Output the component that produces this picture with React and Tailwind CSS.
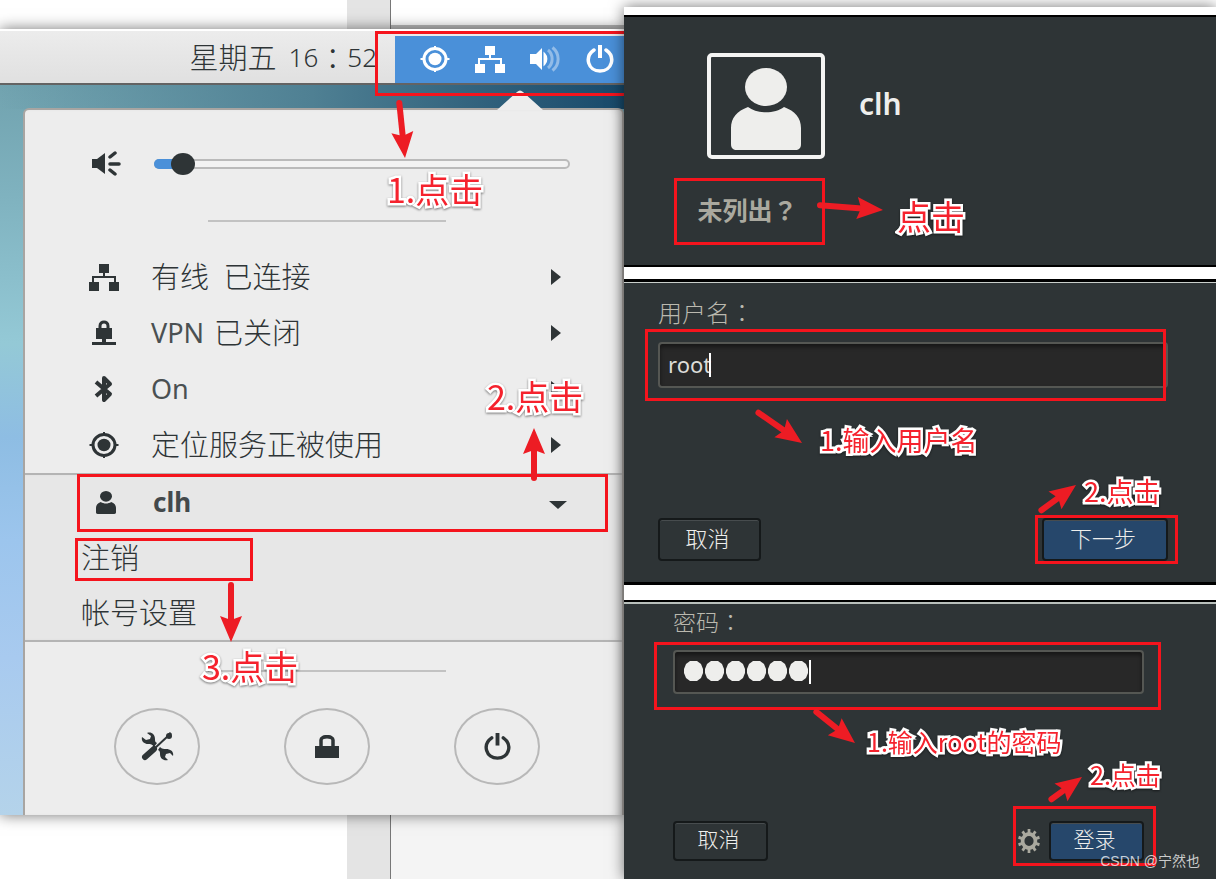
const CJK = "font-['Noto_Sans','Noto_Sans_CJK_SC',sans-serif]";

const NetworkIcon = ({ className }) => (
  <svg width="30" height="28" viewBox="0 0 30 28" fill="currentColor" className={className} aria-hidden="true">
    <path
      d="M10 1h10v9h-4v3h11v6h3v9H20v-9h5v-4H5v4h5v9H0v-9h3v-6h11v-3h-4z"
    />
  </svg>
);

const TargetIcon = ({ className }) => (
  <svg width="30" height="28" viewBox="0 0 30 28" className={className} aria-hidden="true">
    <ellipse cx="15" cy="14" rx="11" ry="10.5" fill="none" stroke="currentColor" strokeWidth="3" />
    <ellipse cx="15" cy="14" rx="6.5" ry="6.2" fill="currentColor" />
    <path d="M15 1v4M15 23v4M.5 14H5M25 14h4.500" stroke="currentColor" strokeWidth="2" />
  </svg>
);

const VolumeIcon = () => (
  <svg width="32" height="28" viewBox="0 0 32 28" fill="none" aria-hidden="true">
    <path d="M1 9h6l6-6v22l-6-6H1z" fill="currentColor" />
    <path d="M15.500 9c2.500 2.500 2.500 7.500 0 10z" fill="currentColor" stroke="currentColor" strokeWidth="2" />
    <path d="M19 5c5.500 4.500 5.500 13.500 0 18M23.500 2.500c7.500 6 7.500 17 0 23" stroke="currentColor" strokeWidth="3" opacity=".4" />
  </svg>
);

const SpeakerIcon = () => (
  <svg width="30" height="26" viewBox="0 0 30 26" aria-hidden="true">
    <path d="M0 8h5l8-6v21l-8-6H0z" fill="currentColor" />
    <path d="M18 6l5-4M18 13h9M18 19l5 4" stroke="currentColor" strokeWidth="3.500" strokeLinecap="round" />
  </svg>
);

const PowerIcon = ({ width, height }) => (
  <svg width={width} height={height} viewBox="0 0 28 28" preserveAspectRatio="none" fill="none" stroke="currentColor" aria-hidden="true">
    <path d="M8 5C-2 12 2 26 14 26S30 12 20 5" strokeWidth="3.500" strokeLinecap="round" />
    <path d="M14 0v13" strokeWidth="4" />
  </svg>
);

const VpnIcon = () => (
  <svg width="24" height="26" viewBox="0 0 24 26" fill="none" aria-hidden="true">
    <path d="M8 8V6c0-5.500 8-5.500 8 0v2" stroke="currentColor" strokeWidth="3" />
    <path d="M4 8h16v11h-6v3h10v3H0v-3h10v-3H4z" fill="currentColor" />
  </svg>
);

const BluetoothIcon = () => (
  <svg width="20" height="28" viewBox="0 0 20 28" fill="none" aria-hidden="true">
    <path d="M2 7l14 12-6 6V3l6 6L2 21" stroke="currentColor" strokeWidth="4" strokeLinejoin="round" />
  </svg>
);

const UserIcon = ({ width, height, className }) => (
  <svg width={width} height={height} viewBox="0 0 70 82" preserveAspectRatio="none" fill="currentColor" className={className} aria-hidden="true">
    <ellipse cx="35" cy="19" rx="21" ry="19" />
    <path d="M17 39c9 7 27 7 36 0 11 4 17 11 17 21v16c0 4-2 6-6 6H6c-4 0-6-2-6-6V60c0-10 6-17 17-21z" />
  </svg>
);

// screwdriver crossed over a double-ended wrench
const ToolsIcon = () => (
  <svg width="33" height="29" viewBox="0 0 33 29" fill="none" stroke="currentColor" aria-hidden="true">
    <path d="M4 25l9-8" strokeWidth="6" strokeLinecap="round" />
    <path d="M13 17L27 4" strokeWidth="2" />
    <circle cx="28" cy="4" r="3" fill="currentColor" stroke="none" />
    <path d="M28 3l2-2" strokeWidth="3" />
    <path
      d="M6 1C10-.5 14 2 14 7c0 2 0 3 2 4l-3 4c-2-3-3-3-6-3-4 0-7-3-6-7l4 3 4-1 1-3zM27 28c-4 1-8-1-8-6 0-2 0-3-2-4l2-3c2 2 4 2 6 2 5 0 8 3 7 7l-3-3-4 1-1 3z"
      fill="currentColor"
      stroke="none"
    />
  </svg>
);

const LockIcon = () => (
  <svg width="24" height="24" viewBox="0 0 24 24" fill="none" aria-hidden="true">
    <path d="M6 12V5c0-4.500 12-4.500 12 0v7" stroke="currentColor" strokeWidth="3.500" />
    <path d="M0 11h24v12H0z" fill="currentColor" />
  </svg>
);

const GearIcon = () => (
  <svg width="22" height="24" viewBox="-12 -12 24 24" preserveAspectRatio="none" fill="none" stroke="currentColor" aria-hidden="true">
    <circle r="7" strokeWidth="4" />
    {[0, 36, 72, 108, 144, 180, 216, 252, 288, 324].map((a) => (
      <path key={a} d="M0-7V-12" strokeWidth="3" transform={`rotate(${a})`} />
    ))}
  </svg>
);

const Caret = ({ open }) => (
  <svg width="18" height="18" viewBox="0 0 18 18" fill="currentColor" className="ml-auto" aria-hidden="true">
    {open ? <path d="M0 7h18l-9 8z" /> : <path d="M2 1l10 8-10 8z" />}
  </svg>
);

// red arrows drawn over a figure, each one [x1, y1, x2, y2]
const Arrows = ({ items }) => (
  <svg className="pointer-events-none absolute inset-0 size-full overflow-visible" aria-hidden="true">
    {items.map(([x1, y1, x2, y2]) => {
      const len = Math.hypot(x2 - x1, y2 - y1);
      const angle = (Math.atan2(y2 - y1, x2 - x1) * 180) / Math.PI;
      return (
        <g key={`${x1}-${y1}`} transform={`translate(${x2} ${y2}) rotate(${angle})`} fill="#ed1c24" stroke="#ed1c24">
          <path d={`M${-len + 3} 0H-18`} strokeWidth="6" strokeLinecap="round" />
          <path d="M0 0L-26 -11L-22 0L-26 11z" stroke="none" />
        </g>
      );
    })}
  </svg>
);

const Mark = ({ className }) => (
  <span className={`pointer-events-none absolute border-[3px] border-[#f5141d] ${className}`} />
);

const Note = ({ className, children }) => (
  <span
    className={`absolute font-['Noto_Sans_CJK_SC',sans-serif] leading-none whitespace-nowrap text-[#f5222d] drop-shadow-[0_1px_1px_rgba(0,0,0,0.5)] [-webkit-text-stroke:5px_white] [paint-order:stroke_fill] ${className}`}
  >
    {children}
  </span>
);

// full-width punctuation, centred in its square
const Punct = ({ children }) => <span className="font-['Noto_Sans_CJK_TC',sans-serif]">{children}</span>;

const menuItems = [
  { icon: <NetworkIcon />, label: "有线\u2002已连接" },
  { icon: <VpnIcon />, latin: "VPN", label: "已关闭" },
  { icon: <BluetoothIcon />, latin: "On" },
  { icon: <TargetIcon />, label: "定位服务正被使用" }
];

const MenuRow = ({ icon, latin, label }) => (
  <button type="button" className="flex h-14 w-full items-center pr-[55px] pl-16 text-left">
    <span className="flex w-[30px] justify-center">{icon}</span>
    <span className="ml-8 flex items-center gap-[10px] pb-[2px] text-[29px] leading-none font-light">
      {latin && <span className="text-[27px] font-normal text-[#4a5052]">{latin}</span>}
      {label}
    </span>
    <Caret />
  </button>
);

const RoundButton = ({ label, children }) => (
  <button
    type="button"
    aria-label={label}
    className="flex h-[77px] w-[86px] items-center justify-center rounded-[50%] border-2 border-[#b8b8b8]"
  >
    {children}
  </button>
);

const DocStrip = ({ className, right }) => (
  <div className={`flex ${className}`}>
    <div className="w-[347px] bg-white" />
    <div className="w-[44px] border-r border-[#777] bg-[#e4e4e4]" />
    <div className={`flex-1 ${right}`} />
  </div>
);

const DarkButton = ({ className, children }) => (
  <button
    type="button"
    className={`rounded-[4px] border-2 border-[#15191a] pr-1 pb-1 leading-none font-light text-[#eeeeec] shadow-[inset_0_1px_0_#474c4e] ${className}`}
  >
    {children}
  </button>
);

const inputStyle =
  "w-full rounded-[4px] border-2 border-[#555753] bg-[#282828] px-2 text-[22px] shadow-[inset_0_3px_4px_rgba(0,0,0,0.45)] outline-none";

function SystemMenu() {
  return (
    <div className="relative overflow-hidden bg-[linear-gradient(180deg,#6a9ba7_0%,#80b3c0_22%,#94c9d6_40%,#8ebde3_52%,#9cc5ed_65%,#a8caef_80%,#b4d3ea_100%)]">
      <header className="flex h-[56px] items-stretch justify-end border-t-2 border-b-2 border-t-white border-b-[#636363] bg-gradient-to-b from-[#ececec] to-[#e0e0e0]">
        <time className="flex items-center text-[29px] leading-none font-light">
          星期五<span className="ml-3 text-[26px]">16</span>
          <Punct>：</Punct>
          <span className="text-[26px]">52</span>
        </time>
        <div className="mt-[5px] ml-[18px] flex w-[229px] items-center justify-between bg-[#4a90d9] pr-[10px] pb-[2px] pl-[25px] text-white">
          <TargetIcon />
          <NetworkIcon />
          <VolumeIcon />
          <PowerIcon width="28" height="28" />
        </div>
      </header>

      <div className="bg-gradient-to-r from-transparent via-[#4f8093] to-[#17496a] bg-[length:100%_24px] bg-no-repeat pt-[23px] pl-[23px]">
        <section className="relative rounded-tl-md rounded-tr-md border-t-2 border-r-2 border-l-2 border-[#a8a5a2] bg-[#ededed] shadow-[inset_-8px_0_8px_-6px_rgba(0,0,0,0.2)]">
          <svg width="46" height="20" viewBox="0 0 46 20" className="absolute -top-5 right-[79px]" aria-hidden="true">
            <path d="M0 20L20 2q3-3 6 0l20 18z" fill="#ededed" />
          </svg>

          <div className="mt-[26px] flex h-14 items-center pl-[67px]">
            <SpeakerIcon />
            <label className="relative ml-8 flex h-6 flex-1 items-center">
              <input
                type="range"
                defaultValue="7"
                aria-label="音量"
                className="absolute inset-0 w-full opacity-0"
              />
              <span className="h-[10px] flex-1 rounded-full border-2 border-[#bababa] bg-[#f2f2f2]" />
              <span className="absolute left-0 h-[10px] w-8 rounded-l-full bg-[#4a90d9]" />
              <span className="absolute left-[17px] h-[22px] w-6 rounded-[50%] bg-[#2e3436]" />
            </label>
            <span className="w-[52px]" />
          </div>
          <hr className="mt-7 mb-[27px] ml-[183px] w-[238px] border-t-2 border-[#c2c2c2]" />

          {menuItems.map((item, i) => (
            <MenuRow key={i} {...item} />
          ))}

          <div className="border-y-2 border-[#b4b4b4] bg-[#e7e7e7] shadow-[inset_-8px_0_8px_-6px_rgba(0,0,0,0.2)]">
            <div className="relative">
              <button type="button" className="flex h-[55px] w-full items-center pr-[55px] pl-[66px] text-left">
                <span className="flex w-[30px] justify-center">
                  <UserIcon width="20" height="23" />
                </span>
                <span className="ml-8 pb-[2px] text-[26px] leading-none font-bold text-[#43494b]">clh</span>
                <Caret open />
              </button>
              <Mark className="-top-px -bottom-[2px] left-[52px] right-[14px]" />
            </div>
            <div className="relative">
              <button type="button" className="h-[55px] w-full pl-[56px] text-left text-[29px] leading-none font-light">
                注销
              </button>
              <Mark className="top-2 bottom-1 left-[50px] w-[178px]" />
            </div>
            <button type="button" className="h-[55px] w-full pl-[56px] text-left text-[29px] leading-none font-light">
              帐号设置
            </button>
          </div>

          <hr className="mt-7 mb-9 ml-[183px] w-[238px] border-t-2 border-[#c2c2c2]" />
          <div className="flex gap-[84px] pb-[30px] pl-[89px]">
            <RoundButton label="设置">
              <ToolsIcon />
            </RoundButton>
            <RoundButton label="锁定">
              <LockIcon />
            </RoundButton>
            <RoundButton label="关机">
              <PowerIcon width="27" height="27" />
            </RoundButton>
          </div>
        </section>
      </div>

      <Mark className="top-[2px] -right-[3px] h-[65px] w-[252px]" />
      <Note className="top-[143px] left-[387px] text-[34px]">1.点击</Note>
      <Note className="top-[350px] left-[487px] text-[34px]">2.点击</Note>
      <Note className="top-[620px] left-[202px] text-[34px]">3.点击</Note>
      <Arrows
        items={[
          [399, 71, 405, 129],
          [534, 452, 534, 399],
          [231, 553, 231, 613]
        ]}
      />
    </div>
  );
}

function UserPicker() {
  return (
    <section className="relative border-y-2 border-black bg-[#2e3436] pt-9 pb-5">
      <div className="flex items-center gap-[34px] pl-[83px]">
        <div className="flex h-[106px] w-[118px] items-end justify-center rounded-[5px] border-4 border-[#f4f4f3] pb-[5px] text-[#eeeeec]">
          <UserIcon width="70" height="82" />
        </div>
        <span className="pb-[5px] text-[30px] leading-none font-semibold text-[#eeeeec]">clh</span>
      </div>
      <button
        type="button"
        className="relative mt-[19px] ml-[50px] block h-[67px] w-[151px] pr-1 pb-[3px] text-[25px] leading-none font-bold text-[#aaa99f]"
      >
        未列出<Punct>？</Punct>
        <Mark className="inset-0" />
      </button>
      <Note className="top-[182px] left-[273px] text-[34px]">点击</Note>
      <Arrows items={[[193, 188, 259, 193]]} />
    </section>
  );
}

function UsernameStep() {
  return (
    <section className="relative mt-3 border-y-[3px] border-black bg-[#2e3436] pt-[14px] pr-12 pb-[21px] pl-[34px] shadow-[inset_0_1px_0_#c9cecb]">
      <label htmlFor="username" className="block h-8 text-[24px] leading-8 font-light text-[#bbb9af]">
        用户名<Punct>：</Punct>
      </label>
      <div className="relative mt-[14px]">
        <input id="username" type="text" defaultValue="root" className={`h-[46px] pb-[2px] text-[#dcdcd8] ${inputStyle}`} />
        <span className="absolute top-[11px] left-[51px] h-6 w-[2px] bg-white" />
        <Mark className="-top-[13px] right-[2px] -bottom-[13px] -left-[13px]" />
      </div>
      <div className="mt-[130px] flex justify-between">
        <DarkButton className="h-[43px] w-[103px] text-[22px]">取消</DarkButton>
        <div className="relative">
          <DarkButton className="h-[43px] w-[126px] bg-[#26476b] text-[22px]">下一步</DarkButton>
          <Mark className="-inset-y-[3px] -right-[10px] -left-[7px]" />
        </div>
      </div>
      <Note className="top-[144px] left-[196px] text-[27px]">1.输入用户名</Note>
      <Note className="top-[195px] left-[460px] text-[27px]">2.点击</Note>
      <Arrows
        items={[
          [132, 129, 178, 161],
          [415, 230, 452, 203]
        ]}
      />
    </section>
  );
}

function PasswordStep() {
  return (
    <section className="relative mt-[15px] flex-1 border-t-2 border-black bg-[#2e3436] pt-[3px] pr-[72px] pb-[17px] pl-[49px] shadow-[inset_0_2px_0_#b9c0bc]">
      <label htmlFor="password" className="block h-8 text-[23px] leading-8 font-light text-[#bbb9af]">
        密码<Punct>：</Punct>
      </label>
      <div className="relative mt-[13px]">
        <input
          id="password"
          type="password"
          defaultValue="secret"
          className={`h-11 text-transparent ${inputStyle}`}
        />
        <span className="pointer-events-none absolute top-[11px] left-[11px] flex gap-[2px]">
          {[0, 1, 2, 3, 4, 5].map((n) => (
            <svg key={n} width="19" height="20" viewBox="0 0 19 20" fill="#eeeeec" aria-hidden="true">
              <path d="M6 0h7l4 3 2 5v4l-2 5-4 3H6l-4-3-2-5V8l2-5z" />
            </svg>
          ))}
        </span>
        <span className="absolute top-[10px] left-[136px] h-6 w-[2px] bg-white" />
        <Mark className="-top-[8px] -right-[17px] -bottom-4 -left-[19px]" />
      </div>
      <div className="mt-[127px] flex items-center justify-between">
        <DarkButton className="h-10 w-[95px] text-[21px]">取消</DarkButton>
        <div className="relative flex items-center gap-[9px]">
          <button type="button" aria-label="会话" className="text-[#aaa99f]">
            <GearIcon />
          </button>
          <DarkButton className="h-10 w-[95px] bg-[#26476b] text-[21px]">登录</DarkButton>
          <Mark className="-top-[15px] -right-3 -bottom-[5px] -left-[5px]" />
        </div>
      </div>
      <Note className="top-[127px] left-[243px] text-[25px]">1.输入root的密码</Note>
      <Note className="top-[160px] left-[466px] text-[25px]">2.点击</Note>
      <Arrows
        items={[
          [190, 108, 231, 141],
          [425, 199, 458, 175]
        ]}
      />
      <span className="absolute right-4 bottom-[11px] font-['Liberation_Sans','Noto_Sans_CJK_SC',sans-serif] text-[14px] leading-none text-white/75">
        CSDN @宁然也
      </span>
    </section>
  );
}

export default function App() {
  return (
    <main className={`grid min-h-screen grid-cols-[624fr_592fr] overflow-hidden bg-white text-[#2e3436] ${CJK}`}>
      <div className="flex flex-col">
        <DocStrip className="h-[29px]" right="border-b-4 border-[#bdbdbd] bg-white" />
        <div className="relative shadow-[0_0_14px_rgba(0,0,0,0.55)]">
          <SystemMenu />
        </div>
        <DocStrip className="flex-1" right="bg-[#f4f4f4]" />
      </div>
      <div className="relative mt-[7px] flex flex-col bg-white pt-2 shadow-[0_0_14px_rgba(0,0,0,0.55)]">
        <UserPicker />
        <UsernameStep />
        <PasswordStep />
      </div>
    </main>
  );
}
